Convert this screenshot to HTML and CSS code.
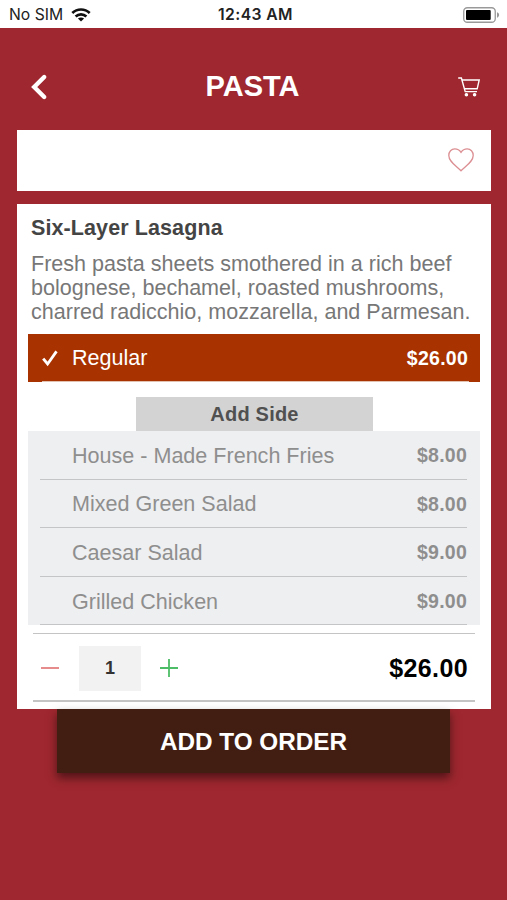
FILE: index.html
```html
<!DOCTYPE html>
<html lang="en">
<head>
    <meta charset="UTF-8">
    <meta name="viewport" content="width=device-width, initial-scale=1.0">
    <title>Pasta</title>
    <link rel="stylesheet" href="styles.css">
</head>
<body>
    <!-- Status bar -->
    <div class="status-bar">
        <div class="status-left">
            <span>No SIM</span>
            <svg class="wifi" width="20" height="14" viewBox="0 0 20 14" fill="none" stroke="#111" stroke-width="2.7">
                <path d="M1.3 5C6.2.3 13.8.3 18.7 5"/>
                <path d="M4.6 8.5C7.7 5.6 12.3 5.6 15.4 8.5"/>
                <path d="M10 13.6L6.9 10.6C8.6 9 11.4 9 13.1 10.6Z" fill="#111" stroke="none"/>
            </svg>
        </div>
        <span class="status-time">12:43 AM</span>
        <svg class="battery" width="37" height="16" viewBox="0 0 37 16">
            <rect x=".75" y=".75" width="31.5" height="14.5" rx="3.6" fill="none" stroke="#999" stroke-width="1.3"/>
            <rect x="3" y="3" width="24.7" height="10" rx="1" fill="#000"/>
            <path d="M34 5.3C36.8 6.2 36.8 9.8 34 10.7Z" fill="#999"/>
        </svg>
    </div>

    <header class="header">
        <svg width="18" height="28" viewBox="0 0 18 28" fill="none" stroke="#fff" stroke-width="4.4" stroke-linecap="round">
            <path d="M14.2 4L4.2 14L14.2 24"/>
        </svg>
        <h1>PASTA</h1>
        <svg width="24" height="22" viewBox="0 0 24 22" fill="none" stroke="#fff" stroke-width="1.4">
            <path d="M1.2 2H4.4L8.2 15.6H20"/>
            <path d="M4.9 4H22.2L20.2 12.8H7.4"/>
            <circle cx="9.4" cy="18.7" r="1.1" fill="#fff"/>
            <circle cx="17.6" cy="18.7" r="1.1" fill="#fff"/>
        </svg>
    </header>

    <main>
        <div class="card favorite">
            <svg width="26" height="24" viewBox="0 0 26 24" fill="none" stroke="#dc8f93" stroke-width="1.3">
                <path d="M13 4.3C11.2 1.6 8.8.9 6.8.9C3.3.9.8 3.7.8 7.4C.8 13.4 7.6 17.4 13 22.8C18.4 17.4 25.2 13.4 25.2 7.4C25.2 3.7 22.7.9 19.2.9C17.2.9 14.8 1.6 13 4.3Z"/>
            </svg>
        </div>

        <div class="card item">
            <h2>Six-Layer Lasagna</h2>
            <p class="description">Fresh pasta sheets smothered in a rich beef<br>bolognese, bechamel, roasted mushrooms,<br>charred radicchio, mozzarella, and Parmesan.</p>

            <div class="option selected">
                <svg class="check" width="16" height="17" viewBox="0 0 16 17" fill="none" stroke="#fff" stroke-width="2.8">
                    <path d="M1.2 8.6L5.6 14L14.5 1.4"/>
                </svg>
                <span class="option-name">Regular</span>
                <span class="price">$26.00</span>
            </div>

            <h3>Add Side</h3>
            <div class="sides">
                <div class="option">
                    <span class="option-name">House - Made French Fries</span>
                    <span class="price">$8.00</span>
                </div>
                <div class="option">
                    <span class="option-name">Mixed Green Salad</span>
                    <span class="price">$8.00</span>
                </div>
                <div class="option">
                    <span class="option-name">Caesar Salad</span>
                    <span class="price">$9.00</span>
                </div>
                <div class="option">
                    <span class="option-name">Grilled Chicken</span>
                    <span class="price">$9.00</span>
                </div>
            </div>

            <div class="quantity">
                <svg width="18" height="18" viewBox="0 0 18 18" stroke="#e57f80" stroke-width="1.8">
                    <path d="M0 9H18"/>
                </svg>
                <span class="count">1</span>
                <svg width="18" height="18" viewBox="0 0 18 18" stroke="#4dbd67" stroke-width="1.8">
                    <path d="M0 9H18M9 0V18"/>
                </svg>
                <span class="total">$26.00</span>
            </div>
        </div>

        <button type="button" class="btn-order">ADD TO ORDER</button>
    </main>
</body>
</html>
```

FILE: styles.css
```css
* {
    box-sizing: border-box;
}

body {
    margin: 0;
    min-height: 900px;
    background-color: #9f272f;
    font-family: "Liberation Sans", Arial, sans-serif;
}

h1, h2, h3, p {
    margin: 0;
}

svg {
    display: block;
    flex-shrink: 0;
}

.status-bar {
    display: grid;
    grid-template-columns: 1fr auto 1fr;
    align-items: center;
    height: 28px;
    padding: 1px 7px 0 9px;
    background-color: #fff;
    color: #222;
    font-family: Inter, sans-serif;
    font-size: 15.7px;
}

.status-left {
    display: flex;
    align-items: center;
    gap: 8px;
}

.status-time {
    padding-left: 2px;
    font-weight: 600;
    letter-spacing: 0.4px;
}

.battery {
    justify-self: end;
}

.header {
    display: flex;
    align-items: center;
    justify-content: space-between;
    height: 102px;
    padding: 16px 26px 0 30px;
    color: #fff;
}

.header h1 {
    padding-bottom: 3px;
    font-size: 29px;
    line-height: 32px;
}

main {
    padding: 0 16px 0 17px;
}

.card {
    background-color: #fff;
}

.favorite {
    display: flex;
    align-items: center;
    justify-content: flex-end;
    height: 61px;
    padding: 0 17px 2px 0;
}

.item {
    height: 505px;
    margin-top: 13px;
    padding: 10px 11px 0;
}

.item h2 {
    padding: 1px 0 0 3px;
    color: #444;
    font-size: 21.5px;
    letter-spacing: 0.1px;
    line-height: 27px;
}

.description {
    height: 72px;
    margin: 10px 0;
    padding-left: 3px;
    color: #777;
    font-size: 21.55px;
    line-height: 24px;
    white-space: nowrap;
}

.option {
    display: flex;
    align-items: center;
    height: 48.6px;
    margin: 0 13px 0 12px;
    padding: 2px 0 0 32px;
    border-bottom: 1.5px solid #c4c5c6;
    color: #8e8e8e;
}

.option-name {
    flex: 1;
    font-size: 21.55px;
}

.price {
    font-size: 19.5px;
    font-weight: bold;
    letter-spacing: 0.25px;
}

.option.selected {
    height: 48px;
    margin: 0;
    padding: 0 12px 0 14px;
    border: none;
    background: linear-gradient(#e3c1b0, #e3c1b0) 14px 47px / 427px 1px no-repeat #a93300;
    color: #fff;
}

.check {
    margin-right: 14px;
}

.item h3 {
    width: 237px;
    margin: 15px auto 0 108px;
    background-color: #d3d3d3;
    color: #505050;
    font-size: 20px;
    letter-spacing: 0.2px;
    line-height: 34px;
    text-align: center;
}

.sides {
    background-color: #eeeff1;
}

.quantity {
    display: flex;
    align-items: center;
    height: 69px;
    margin: 8px 5px 0;
    padding: 2px 7px 0 8px;
    border-top: 1.5px solid #c4c4c4;
    border-bottom: 2px solid #c4c4c4;
}

.count {
    width: 62px;
    margin: 0 19px 0 20px;
    background-color: #f2f2f2;
    color: #333;
    font-size: 18px;
    font-weight: bold;
    line-height: 45px;
    text-align: center;
}

.total {
    margin-left: auto;
    color: #000;
    font-size: 25px;
    font-weight: bold;
    letter-spacing: 0.4px;
}

.btn-order {
    display: block;
    width: 393px;
    height: 64px;
    margin-left: 40px;
    padding-top: 2px;
    border: none;
    background-color: #421e12;
    box-shadow: 0 5px 9px rgba(0, 0, 0, 0.5);
    color: #fff;
    font-family: inherit;
    font-size: 24.3px;
    font-weight: bold;
    cursor: pointer;
}
```
